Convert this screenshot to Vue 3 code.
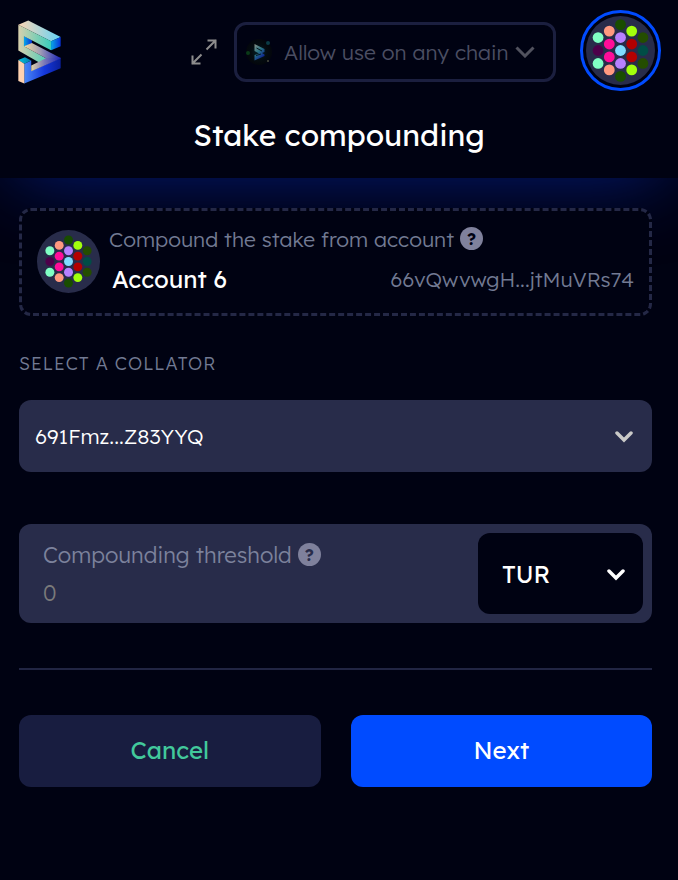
<script setup>
import { ref } from 'vue'

const chain = ref('any')
const collator = ref('691Fmz...Z83YYQ')
const threshold = ref('')
const token = ref('TUR')

// Identicon: a hexagonal grid of 19 dots on a 64-unit disc
const dx = 10.4
const columns = [
  { x: 32 - 2 * dx, y: 20, colors: ['#80ffc4', '#4d004a', '#80ffc4'] },
  { x: 32 - dx, y: 14, colors: ['#ff9980', '#ff0d99', '#ff0d99', '#ff9980'] },
  { x: 32, y: 8, colors: ['#194d00', '#b780ff', '#80dcff', '#b780ff', '#194d00'] },
  { x: 32 + dx, y: 14, colors: ['#a2ff0d', '#b30000', '#b30000', '#a2ff0d'] },
  { x: 32 + 2 * dx, y: 20, colors: ['#244d00', '#004d46', '#244d00'] },
]
const dots = columns.flatMap((c) => c.colors.map((fill, i) => ({ x: c.x, y: c.y + i * 12, fill })))
</script>

<template>
  <div class="page">
    <header class="header">
      <div class="topbar">
        <a href="#" class="logo" aria-label="Home">
          <svg viewBox="54 60 130 193" width="43" height="64">
            <defs>
              <linearGradient id="lt"><stop offset="0" stop-color="#ffd7b5" /><stop offset="1" stop-color="#62d2f5" /></linearGradient>
              <linearGradient id="lf"><stop offset="0" stop-color="#d9d0ad" /><stop offset="1" stop-color="#38cdbb" /></linearGradient>
              <linearGradient id="lr"><stop offset="0" stop-color="#08a8e8" /><stop offset="1" stop-color="#0830d8" /></linearGradient>
              <linearGradient id="ld"><stop offset="0" stop-color="#f6dda0" /><stop offset=".45" stop-color="#9f9bb5" /><stop offset="1" stop-color="#1b24b8" /></linearGradient>
              <linearGradient id="lb"><stop offset="0" stop-color="#4a88f8" /><stop offset=".55" stop-color="#1538dc" /><stop offset="1" stop-color="#0a1f9c" /></linearGradient>
              <linearGradient id="lc"><stop offset="0" stop-color="#00c6e0" /><stop offset="1" stop-color="#0878a8" /></linearGradient>
              <linearGradient id="ls"><stop offset="0" stop-color="#e0d2a6" /><stop offset=".45" stop-color="#7a78b8" /><stop offset="1" stop-color="#1b24b8" /></linearGradient>
            </defs>
            <polygon points="72,108 96,121 96,131 72,141" fill="url(#lr)" />
            <polygon points="55,74 85,61 183,111 154,124" fill="url(#lt)" />
            <polygon points="55,74 154,124 154,151 72,109 72,139 140,176 118,188 55,152" fill="url(#lf)" />
            <polygon points="154,124 183,111 183,139 154,151" fill="url(#lr)" />
            <polygon points="72,139 96,129 183,175 140,176" fill="url(#ld)" />
            <polygon points="73,192 94,182 94,214 183,175 183,206 73,252" fill="url(#lb)" />
            <polygon points="94,197 140,175 183,174 183,176 94,215" fill="url(#ls)" />
            <polygon points="55,181 75,172 94,182 73,192" fill="url(#lc)" />
            <polygon points="55,181 73,192 73,252 55,244" fill="#ffd2b0" />
          </svg>
        </a>
        <div class="tools">
          <button class="expand" type="button" aria-label="Open full screen">
            <svg viewBox="0 0 26 26" width="26" height="26" fill="none" stroke="#8d8d8d" stroke-width="2">
              <path d="M15.5 10.5 L25 1 M16.500 1.500 H24.500 V9.500 M10.500 15.500 L1 25 M1.500 16.500 V24.500 H9.500" />
            </svg>
          </button>
          <div class="chain">
            <svg class="chain-icon" viewBox="0 0 28 28" width="28" height="28" aria-hidden="true">
              <defs>
                <linearGradient id="cg" x2="0.6" y2="1"><stop offset="0" stop-color="#8b9185" /><stop offset=".5" stop-color="#2a7484" /><stop offset="1" stop-color="#0a1b90" /></linearGradient>
                <radialGradient id="cb"><stop offset="0" stop-color="#05242c" /><stop offset=".6" stop-color="#040c10" /><stop offset="1" stop-color="#03060c" /></radialGradient>
              </defs>
              <circle cx="13" cy="14" r="13" fill="url(#cb)" />
              <path d="M8.500 6 L18.500 11 V14 L16 15 L18.500 16.500 V18 L8.500 22.500 V17 L13 15.500 L8.500 13 Z" fill="url(#cg)" />
              <path d="M10.500 10 L16 13 M10 17.500 L15 16" stroke="#05181f" stroke-width="1" />
              <circle cx="22" cy="5" r="2" fill="#0b3c45" />
              <circle cx="2" cy="15" r="2" fill="#0a3a18" />
              <circle cx="22" cy="23" r="1" fill="#4a4c40" />
            </svg>
            <select v-model="chain" aria-label="Chain">
              <option value="any">Allow use on any chain</option>
            </select>
            <svg class="chain-arrow" viewBox="0 0 20 12" width="20" height="12" fill="none" stroke="#51525e" stroke-width="3" aria-hidden="true">
              <path d="M1.500 1.500 L10 10 L18.500 1.500" />
            </svg>
          </div>
          <button class="avatar-button" type="button" aria-label="Account">
            <svg viewBox="0 0 64 64" width="69" height="69">
              <circle cx="32" cy="32" r="32" fill="#282c4a" />
              <circle v-for="(d, i) in dots" :key="i" :cx="d.x" :cy="d.y" r="5" :fill="d.fill" />
            </svg>
          </button>
        </div>
      </div>
      <h1>Stake compounding</h1>
    </header>

    <main class="body">
      <section class="account">
        <svg class="account-icon" viewBox="0 0 64 64" width="63" height="63">
          <circle cx="32" cy="32" r="32" fill="#282c4a" />
          <g transform="translate(32 32) scale(0.91) translate(-32 -32)">
            <circle v-for="(d, i) in dots" :key="i" :cx="d.x" :cy="d.y" r="5" :fill="d.fill" />
          </g>
        </svg>
        <div class="account-info">
          <div class="caption">
            <span>Compound the stake from account</span>
            <button class="help" type="button" aria-label="Help">?</button>
          </div>
          <div class="account-row">
            <strong>Account 6</strong>
            <span class="address">66vQwvwgH...jtMuVRs74</span>
          </div>
        </div>
      </section>

      <label class="section-label" for="collator">Select a collator</label>
      <div class="collator">
        <select id="collator" v-model="collator">
          <option>691Fmz...Z83YYQ</option>
        </select>
        <svg viewBox="0 0 18 14" width="18" height="14" fill="none" stroke="#cacac8" stroke-width="3.500" stroke-linecap="round" aria-hidden="true">
          <path d="M2 4 L9 11 L16 4" />
        </svg>
      </div>

      <div class="threshold">
        <div class="threshold-field">
          <div class="caption">
            <label for="threshold">Compounding threshold</label>
            <button class="help" type="button" aria-label="Help">?</button>
          </div>
          <input id="threshold" v-model="threshold" type="text" inputmode="decimal" placeholder="0" />
        </div>
        <div class="token">
          <select v-model="token" aria-label="Token">
            <option>TUR</option>
          </select>
          <svg viewBox="0 0 18 14" width="18" height="14" fill="none" stroke="#ffffff" stroke-width="3.500" stroke-linecap="round" aria-hidden="true">
            <path d="M2 4 L9 11 L16 4" />
          </svg>
        </div>
      </div>

      <hr />

      <div class="actions">
        <button class="cancel" type="button">Cancel</button>
        <button class="next" type="button">Next</button>
      </div>
    </main>
  </div>
</template>

<style>
body {
  background: #000212;
}
</style>

<style scoped>
.page {
  min-height: 100vh;
  display: flex;
  flex-direction: column;
  overflow-x: hidden;
  background: #000212;
  color: #fff;
  font-family: Lexend, Inter, sans-serif;
  font-size: 21px;
  font-weight: 300;
}
.page * {
  box-sizing: border-box;
}
button,
select,
input {
  margin: 0;
  padding: 0;
  border: 0;
  background: none;
  color: inherit;
  font: inherit;
  appearance: none;
  outline-offset: 2px;
}
button,
select {
  cursor: pointer;
}
svg {
  display: block;
  flex: none;
}
.header {
  background: #000212;
  box-shadow: 0 14px 76px -14px #041a78;
}
.topbar {
  display: flex;
  justify-content: space-between;
  align-items: center;
  padding: 10px 17px 0 18px;
}
.logo,
.expand,
.chain {
  margin-top: 2px;
}
.tools {
  display: flex;
  align-items: center;
}
.expand {
  margin-right: 17px;
}
.chain {
  display: grid;
  grid-template-columns: 1fr;
  align-items: center;
  width: 322px;
  height: 60px;
  margin-right: 24px;
  border: 3px solid #1b1f3f;
  border-radius: 12px;
}
.chain > *,
.collator > *,
.token > * {
  grid-area: 1 / 1;
}
.chain > svg,
.collator > svg,
.token > svg {
  pointer-events: none;
}
.chain select {
  width: 100%;
  height: 100%;
  padding: 0 40px 0 47px;
  color: #4b4e62;
}
.chain-icon {
  margin-left: 9px;
}
.chain-arrow {
  justify-self: end;
  margin-right: 18px;
}
.avatar-button {
  padding: 3px;
  border: 3px solid #004bff;
  border-radius: 50%;
}
h1 {
  margin: 0;
  padding: 24px 0 22px;
  font-size: 30px;
  font-weight: 400;
  line-height: 41px;
  text-align: center;
}
.body {
  flex: 1;
  padding: 30px 26px 30px 19px;
}
.account {
  display: flex;
  align-items: center;
  gap: 9px;
  height: 108px;
  padding: 0 15px 2px;
  border: 3px dashed #242846;
  border-radius: 12px;
  background: #000212;
}
.account-info {
  flex: 1;
  min-width: 0;
  padding-bottom: 4px;
}
.caption {
  display: flex;
  align-items: center;
  gap: 6px;
  line-height: 28px;
  color: #727a93;
}
.help {
  width: 23px;
  height: 23px;
  margin-bottom: 2px;
  border-radius: 50%;
  background: #7f819c;
  color: #000212;
  font-size: 17px;
  font-weight: 700;
  line-height: 23px;
  text-align: center;
}
.account-row {
  display: flex;
  justify-content: space-between;
  align-items: center;
  padding-left: 3px;
  margin-top: 12px;
  line-height: 28px;
}
.account-row strong {
  font-size: 24px;
  font-weight: 400;
}
.address {
  color: #727a93;
}
.section-label {
  display: block;
  margin: 36px 0 24px;
  color: #727a93;
  font-size: 18px;
  font-weight: 300;
  line-height: 24px;
  letter-spacing: 1px;
  text-transform: uppercase;
}
.collator {
  display: grid;
  align-items: center;
  height: 72px;
  border-radius: 12px;
  background: #282c4a;
}
.collator select {
  width: 100%;
  height: 100%;
  padding: 0 48px 0 16px;
}
.collator svg {
  justify-self: end;
  margin-right: 19px;
}
.token svg {
  justify-self: end;
  margin-right: 18px;
}
.threshold {
  display: flex;
  justify-content: space-between;
  margin-top: 52px;
  padding: 9px;
  border-radius: 12px;
  background: #282c4a;
  font-size: 22px;
}
.threshold-field {
  display: flex;
  flex-direction: column;
  gap: 10px;
  flex: 1;
  min-width: 0;
  padding: 8px 12px 0 15px;
}
.threshold .caption {
  color: #7c829c;
}
.threshold .help {
  color: #282c4a;
}
.threshold input {
  width: 100%;
  line-height: 28px;
}
.threshold input::placeholder {
  color: #7a7a7a;
  opacity: 1;
}
.token {
  display: grid;
  align-items: center;
  width: 165px;
  height: 81px;
  border-radius: 12px;
  background: #000212;
}
.token select {
  width: 100%;
  height: 100%;
  padding: 0 48px 0 24px;
  font-size: 24px;
  font-weight: 400;
}
hr {
  height: 2px;
  margin: 45px 0;
  border: 0;
  background: #212543;
}
.actions {
  display: grid;
  grid-template-columns: 1fr 1fr;
  gap: 30px;
}
.actions button {
  height: 72px;
  padding-bottom: 2px;
  border-radius: 12px;
  font-size: 24px;
  font-weight: 400;
}
.actions .cancel {
  background: #181d40;
  color: #42c99c;
}
.actions .next {
  background: #004bff;
}
</style>
